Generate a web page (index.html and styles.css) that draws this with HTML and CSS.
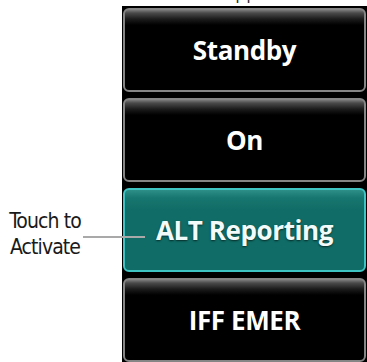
FILE: index.html
```html
<!DOCTYPE html>
<html lang="en">
<head>
  <meta charset="UTF-8">
  <meta name="viewport" content="width=device-width, initial-scale=1.0">
  <title>Transponder Mode</title>
  <link rel="stylesheet" href="styles.css">
</head>
<body>
  <div class="layout">
    <!-- Callout on the left -->
    <div class="callouts">
      <div class="callout">Touch to<br>Activate</div>
    </div>

    <div class="screen">
      <div class="caption"><span>Appears</span></div>
      <div class="panel">
        <button class="key">Standby</button>
        <button class="key">On</button>
        <button class="key active">ALT Reporting</button>
        <button class="key">IFF EMER</button>
      </div>
    </div>
  </div>
</body>
</html>
```

FILE: styles.css
```css
body {
    margin: 0;
    background: #ffffff;
    font-family: 'Open Sans', 'Liberation Sans', sans-serif;
    overflow: hidden;
}

.layout {
    display: flex;
    height: 362px;
}

.callouts {
    width: 122px;
    flex: none;
    padding-top: 208px;
    box-sizing: border-box;
}

.callout {
    position: relative;
    width: 90px;
    text-align: center;
    font-family: 'DejaVu Sans Condensed', 'Liberation Sans', sans-serif;
    font-size: 21px;
    line-height: 26px;
    color: #1a1a1a;
    letter-spacing: -0.9px;
}

/* leader line runs over the edge of the key */
.callout::after {
    content: "";
    position: absolute;
    left: 83px;
    top: 28px;
    width: 62px;
    height: 2px;
    background: #a9a9a9;
}

.screen {
    flex: 1;
    display: flex;
    flex-direction: column;
}

.caption {
    height: 8px;
    overflow: hidden;
}

.caption span {
    display: block;
    margin-top: -19px;
    padding-left: 28px;
    text-align: center;
    font-size: 18px;
    line-height: 22px;
    color: #333;
}

.panel {
    flex: 1;
    background: #000;
    padding: 2px 1px 0 1px;
    display: flex;
    flex-direction: column;
    gap: 6px;
}

.key {
    height: 84px;
    flex: none;
    border: 2px solid #858585;
    border-radius: 6px;
    background: linear-gradient(#7a7a7a 0, #4a4a4a 3px, #1c1c1c 9px, #000 15px);
    color: #ffffff;
    font-family: 'Open Sans', sans-serif;
    font-weight: 700;
    font-size: 26px;
    letter-spacing: -0.4px;
    padding: 0;
    text-shadow: 0 1px 2px rgba(0, 0, 0, 0.6);
}

.key.active {
    border-color: #3fc3c3;
    background: linear-gradient(#2d8f88 0, #17766f 8px, #106c66 20px);
    color: #f2fbf9;
}
```
